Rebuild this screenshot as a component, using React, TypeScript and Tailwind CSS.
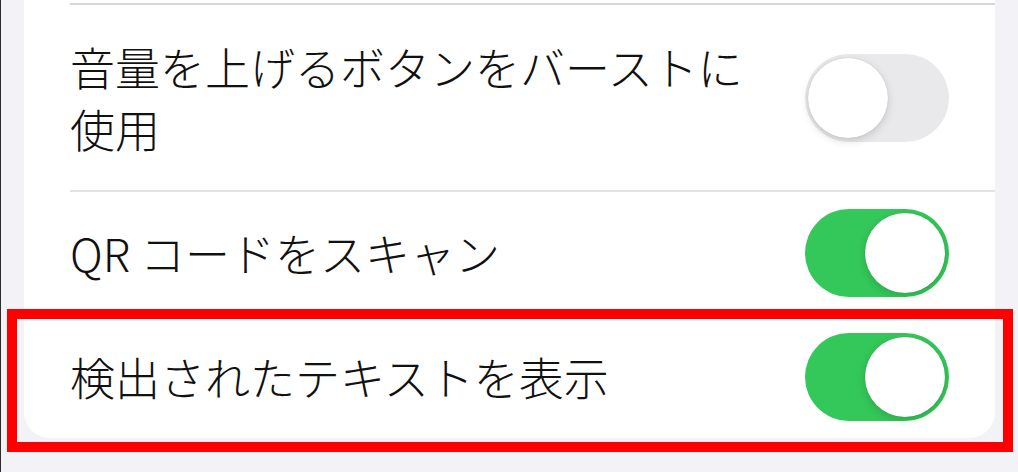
import React from 'react';

type Row = { label: React.ReactNode; on: boolean };

function Toggle({ on }: { on: boolean }) {
  return (
    <div
      className={
        on
          ? 'flex h-[88px] w-[144px] shrink-0 items-center justify-end rounded-full bg-[#34c759] px-[4px]'
          : 'flex h-[88px] w-[144px] shrink-0 items-center justify-start rounded-full bg-[#e9e9eb] px-[3px]'
      }
    >
      <div className="h-[80px] w-[80px] rounded-full bg-white shadow-[0_3px_8px_rgba(0,0,0,0.15),0_0_1px_rgba(0,0,0,0.2)]" />
    </div>
  );
}

export default function App() {
  const rows: Row[] = [
    { label: <>音量を上げるボタンをバーストに<br />使用</>, on: false },
    { label: 'QR コードをスキャン', on: true },
    { label: '検出されたテキストを表示', on: true },
  ];

  return (
    <div
      className="relative h-[472px] w-[1018px] overflow-hidden border-l border-[#2c2c2e] bg-[#f2f2f7]"
      style={{ fontFamily: '"Noto Sans CJK JP", "Noto Sans", sans-serif' }}
    >
      <div className="ml-[23px] w-[971px] overflow-hidden rounded-b-[26px] bg-white">
        <div className="h-[3px]" />
        {rows.map((row, i) => (
          <div key={i} className="pl-[46px]">
            <div
              className={
                i === 0
                  ? 'flex h-[187px] items-center gap-[35px] border-t-2 border-[#d6d6da] pr-[46px]'
                  : 'flex h-[124px] items-center gap-[35px] border-t-2 border-[#e3e3e7] pr-[46px]'
              }
            >
              <div className="flex-1 text-[45px] font-light leading-[62px] text-[#111]">{row.label}</div>
              <Toggle on={row.on} />
            </div>
          </div>
        ))}
      </div>

      {/* highlight box */}
      <div className="absolute left-[6px] top-[309px] h-[143px] w-[1006px] border-[10px] border-[#ff0000]" />
    </div>
  );
}
